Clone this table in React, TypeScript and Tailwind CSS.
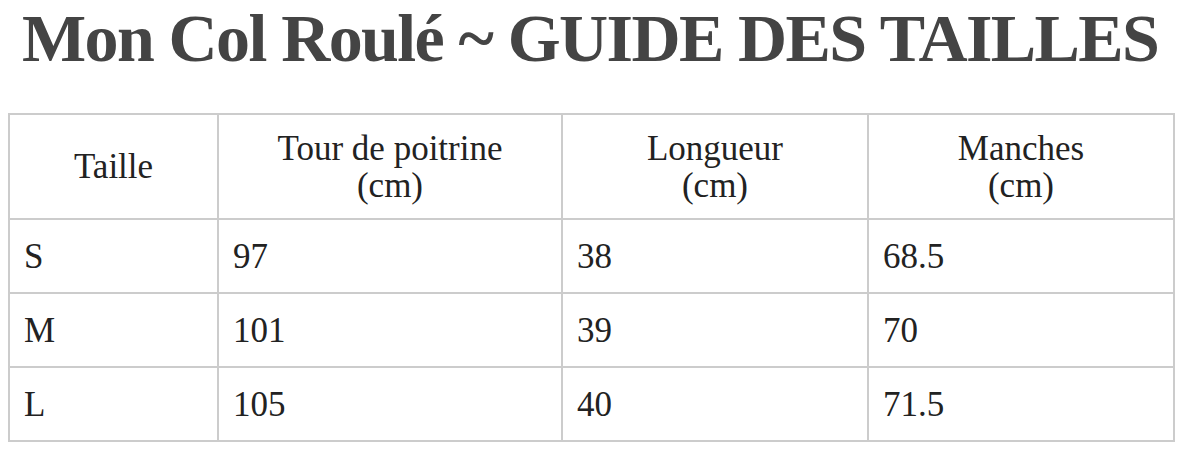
const rows = [
  ['S', '97', '38', '68.5'],
  ['M', '101', '39', '70'],
  ['L', '105', '40', '71.5'],
];

const serif = { fontFamily: '"Liberation Serif", "Times New Roman", serif' };

export default function App() {
  return (
    <div className="w-[1183px] h-[453px] bg-white overflow-hidden" style={serif}>
      <h1 className="pl-[22px] text-[68px] leading-[76px] tracking-[-1.6px] font-bold text-[#444] whitespace-nowrap">
        Mon Col Roulé ~ GUIDE DES TAILLES
      </h1>
      <table className="mt-[37px] ml-[8px] w-[1165px] border-collapse border-2 border-[#cccccc] text-[35px] text-[#222] table-fixed">
        <colgroup>
          <col className="w-[209px]" />
          <col className="w-[344px]" />
          <col className="w-[306px]" />
          <col className="w-[306px]" />
        </colgroup>
        <thead>
          <tr className="h-[105px]">
            <th className="border-2 border-[#cccccc] font-normal text-center leading-[37px]">Taille</th>
            <th className="border-2 border-[#cccccc] font-normal text-center leading-[37px]">Tour de poitrine<br />(cm)</th>
            <th className="border-2 border-[#cccccc] font-normal text-center leading-[37px]">Longueur<br />(cm)</th>
            <th className="border-2 border-[#cccccc] font-normal text-center leading-[37px]">Manches<br />(cm)</th>
          </tr>
        </thead>
        <tbody>
          {rows.map((r) => (
            <tr key={r[0]} className="h-[74px]">
              {r.map((c, i) => (
                <td key={i} className="border-2 border-[#cccccc] px-[14px] leading-[37px] align-middle">{c}</td>
              ))}
            </tr>
          ))}
        </tbody>
      </table>
    </div>
  );
}
